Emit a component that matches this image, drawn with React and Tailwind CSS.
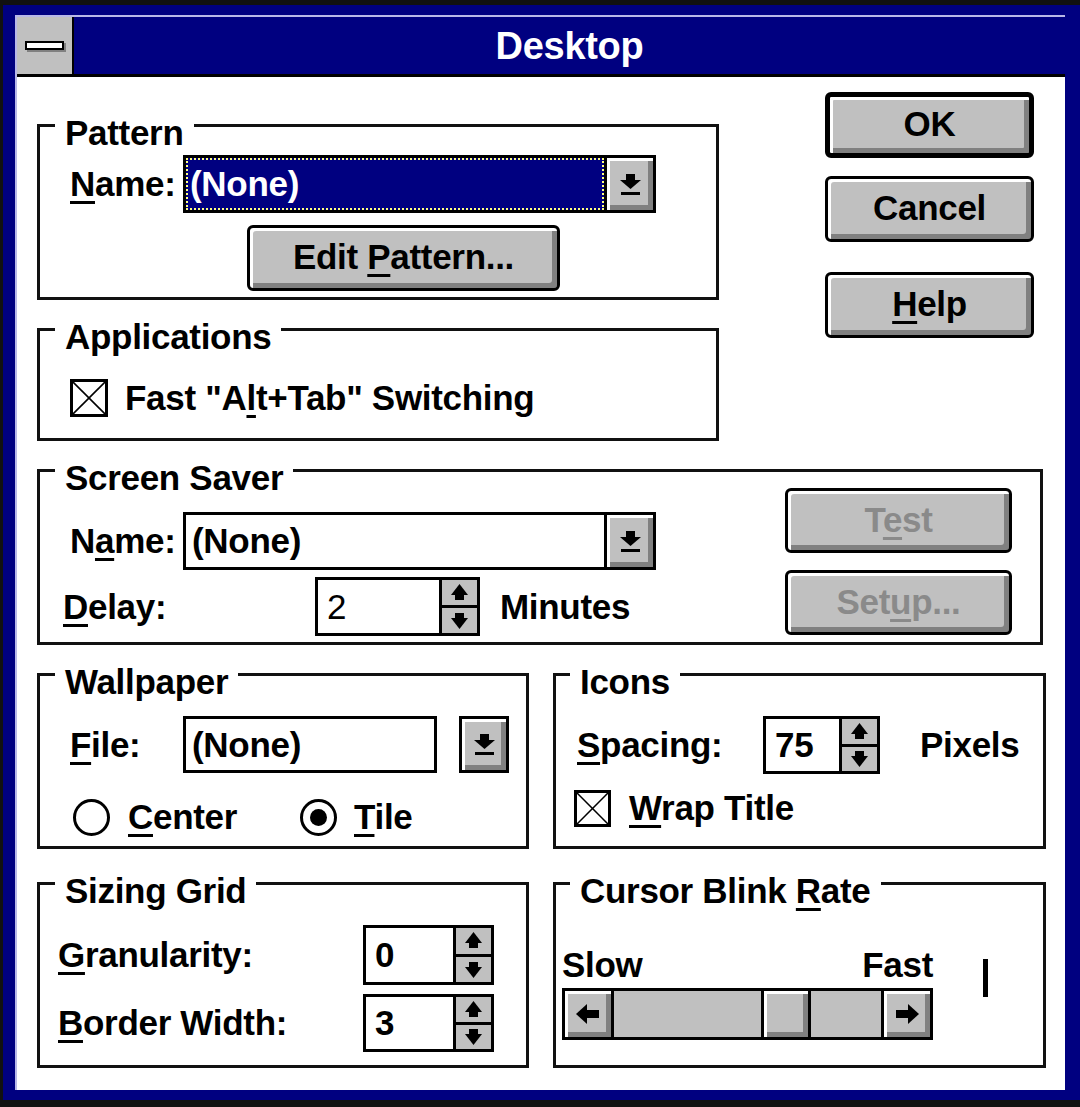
import React from 'react';

// Windows 3.1 "Desktop" control panel dialog

const U = ({ children }) => (
  <span className="underline decoration-3 underline-offset-[5px]">{children}</span>
);

const raised = 'bg-[#c0c0c0] shadow-[inset_3px_3px_0_#ffffff,inset_-5px_-5px_0_#808080]';

function Button({ children, className = '', isDefault = false, disabled = false }) {
  return (
    <div
      className={`flex items-center justify-center rounded-[6px] border-black ${raised} ${
        isDefault ? 'border-[5px]' : 'border-[3px]'
      } ${disabled ? 'text-[#8a8a8a]' : 'text-black'} ${className}`}
    >
      <span className="-mt-[2px]">{children}</span>
    </div>
  );
}

function DropArrow() {
  return (
    <svg width="23" height="21" viewBox="0 0 23 21">
      <rect x="7" y="0" width="9" height="6" fill="black" />
      <polygon points="1,6 22,6 11.5,15" fill="black" />
      <rect x="2" y="18" width="19" height="3" fill="black" />
    </svg>
  );
}

function SpinUp() {
  return (
    <svg width="17" height="17" viewBox="0 0 17 17">
      <polygon points="8.5,0 17,11 0,11" fill="black" />
      <rect x="4" y="11" width="9" height="5" fill="black" />
    </svg>
  );
}

function SpinDown() {
  return (
    <svg width="17" height="17" viewBox="0 0 17 17">
      <rect x="4" y="1" width="9" height="5" fill="black" />
      <polygon points="0,6 17,6 8.5,17" fill="black" />
    </svg>
  );
}

function ScrollArrow({ dir }) {
  return (
    <svg width="24" height="20" viewBox="0 0 24 20">
      {dir === 'left' ? (
        <>
          <polygon points="0,10 11,0 11,20" fill="black" />
          <rect x="11" y="6" width="12" height="8" fill="black" />
        </>
      ) : (
        <>
          <rect x="1" y="6" width="12" height="8" fill="black" />
          <polygon points="24,10 13,0 13,20" fill="black" />
        </>
      )}
    </svg>
  );
}

function DropButton({ className = '' }) {
  return (
    <div className={`flex items-center justify-center ${raised} ${className}`}>
      <DropArrow />
    </div>
  );
}

function Combo({ selected = false, className = '' }) {
  return (
    <div className={`flex border-[3px] border-black bg-white ${className}`}>
      {selected ? (
        <div className="flex flex-1 items-center border-2 border-dotted border-[#ffff80] bg-[#000080] pl-[2px] text-white">
          (None)
        </div>
      ) : (
        <div className="flex flex-1 items-center pl-[6px]">(None)</div>
      )}
      <DropButton className="w-[49px] border-l-[3px] border-black" />
    </div>
  );
}

function Spin({ value, className = '', thin = false }) {
  return (
    <div className={`flex border-[3px] border-black bg-white ${className}`}>
      <div className={`flex flex-1 items-center pl-[9px] ${thin ? 'font-normal' : ''}`}>{value}</div>
      <div className="flex w-[38px] flex-col border-l-[3px] border-black bg-[#c0c0c0]">
        <div className="flex flex-1 items-center justify-center">
          <SpinUp />
        </div>
        <div className="h-[3px] bg-black" />
        <div className="flex flex-1 items-center justify-center">
          <SpinDown />
        </div>
      </div>
    </div>
  );
}

function Checkbox({ className = '' }) {
  return (
    <div className={`border-[3px] border-black bg-white ${className}`}>
      <svg className="h-full w-full" viewBox="0 0 10 10" preserveAspectRatio="none">
        <line x1="0" y1="0" x2="10" y2="10" stroke="black" strokeWidth="0.5" />
        <line x1="10" y1="0" x2="0" y2="10" stroke="black" strokeWidth="0.5" />
      </svg>
    </div>
  );
}

function Radio({ checked = false }) {
  return (
    <div className="flex h-[37px] w-[37px] items-center justify-center rounded-full border-[3px] border-black bg-white">
      {checked && <div className="h-[17px] w-[17px] rounded-full bg-black" />}
    </div>
  );
}

function Group({ title, className = '', labelClass = 'ml-[15px]', children }) {
  return (
    <div className={`border-[3px] border-[#111] ${className}`}>
      <div className={`-mt-[14px] w-fit bg-white px-[10px] leading-[40px] ${labelClass}`}>{title}</div>
      {children}
    </div>
  );
}

export default function App() {
  return (
    <div className="flex h-[1107px] w-[1080px] flex-col overflow-hidden bg-[#111] pb-[7px] pl-[3px] pt-[5px] font-['Liberation_Sans',Arial,sans-serif] text-[35px] font-bold leading-[40px] tracking-[-0.3px] text-black">
      <div className="flex flex-1 flex-col border-b-[10px] border-l-[12px] border-r-[15px] border-t-[10px] border-[#000080]">
        <div className="flex flex-1 flex-col border-l-2 border-t-2 border-[#b8b8e8]">
          {/* Title bar */}
          <div className="flex h-[60px] border-b-[3px] border-black bg-[#000080]">
            <div className="flex w-[57px] items-center justify-center border-r-2 border-black bg-[#c0c0c0]">
              <div className="h-[9px] w-[39px] border-2 border-black bg-white shadow-[2px_2px_0_#808080]" />
            </div>
            <div className="flex flex-1 items-center justify-center text-[38px] text-white">Desktop</div>
          </div>

          {/* Dialog body */}
          <div className="flex-1 bg-white pl-[20px] pt-[15px]">
            <div className="flex">
              <div className="mt-[32px] w-[682px]">
                <Group title="Pattern" className="h-[176px]">
                  <div className="mt-[2px] flex h-[58px] items-center pl-[30px]">
                    <div className="w-[113px]">
                      <U>N</U>ame:
                    </div>
                    <Combo selected className="h-[58px] w-[473px]" />
                  </div>
                  <Button className="ml-[207px] mt-[12px] h-[66px] w-[313px]">
                    Edit <U>P</U>attern...
                  </Button>
                </Group>

                <Group title="Applications" className="mt-[28px] h-[113px]">
                  <div className="mt-[21px] flex items-center pl-[30px]">
                    <Checkbox className="h-[38px] w-[38px]" />
                    <div className="ml-[17px]">
                      Fast "A<U>l</U>t+Tab" Switching
                    </div>
                  </div>
                </Group>
              </div>

              <div className="ml-[106px] flex w-[209px] flex-col">
                <Button isDefault className="h-[66px]">
                  OK
                </Button>
                <Button className="mt-[18px] h-[66px]">Cancel</Button>
                <Button className="mt-[30px] h-[66px]">
                  <U>H</U>elp
                </Button>
              </div>
            </div>

            <Group title="Screen Saver" className="mt-[28px] h-[176px] w-[1006px]">
              <div className="flex">
                <div className="flex w-[616px] flex-col">
                  <div className="mt-[14px] flex h-[58px] items-center pl-[30px]">
                    <div className="w-[113px]">
                      N<U>a</U>me:
                    </div>
                    <Combo className="h-[58px] w-[473px]" />
                  </div>
                  <div className="mt-[7px] flex h-[59px] items-center pl-[23px]">
                    <div className="w-[252px]">
                      <U>D</U>elay:
                    </div>
                    <Spin value="2" thin className="h-[59px] w-[165px]" />
                    <div className="ml-[20px]">Minutes</div>
                  </div>
                </div>
                <div className="-mt-[10px] ml-auto mr-[28px] flex w-[227px] flex-col">
                  <Button disabled className="h-[65px]">
                    T<U>e</U>st
                  </Button>
                  <Button disabled className="mt-[17px] h-[65px]">
                    Set<U>u</U>p...
                  </Button>
                </div>
              </div>
            </Group>

            <div className="mt-[28px] flex gap-[24px]">
              <Group title="Wallpaper" className="h-[176px] w-[492px]">
                <div className="mt-[14px] flex h-[57px] items-center pl-[30px]">
                  <div className="w-[113px]">
                    <U>F</U>ile:
                  </div>
                  <div className="flex h-[57px] w-[254px] items-center border-[3px] border-black pl-[6px]">(None)</div>
                  <div className="ml-[22px] h-[57px] w-[50px] border-[3px] border-black">
                    <DropButton className="h-full w-full" />
                  </div>
                </div>
                <div className="mt-[24px] flex items-center pl-[33px]">
                  <div className="flex w-[227px] items-center">
                    <Radio />
                    <div className="ml-[18px]">
                      <U>C</U>enter
                    </div>
                  </div>
                  <Radio checked />
                  <div className="ml-[17px]">
                    <U>T</U>ile
                  </div>
                </div>
              </Group>

              <Group title="Icons" labelClass="ml-[14px]" className="h-[176px] w-[493px]">
                <div className="mt-[14px] flex h-[58px] items-center pl-[21px]">
                  <div className="w-[186px]">
                    <U>S</U>pacing:
                  </div>
                  <Spin value="75" className="h-[58px] w-[117px]" />
                  <div className="ml-[40px]">Pixels</div>
                </div>
                <div className="mt-[14px] flex items-center pl-[18px]">
                  <Checkbox className="h-[37px] w-[37px]" />
                  <div className="ml-[18px]">
                    <U>W</U>rap Title
                  </div>
                </div>
              </Group>
            </div>

            <div className="mt-[33px] flex gap-[24px]">
              <Group title="Sizing Grid" className="h-[186px] w-[492px]">
                <div className="mt-[14px] flex h-[60px] items-center pl-[18px]">
                  <div className="w-[305px]">
                    <U>G</U>ranularity:
                  </div>
                  <Spin value="0" className="h-[60px] w-[131px]" />
                </div>
                <div className="mt-[9px] flex h-[58px] items-center pl-[18px]">
                  <div className="w-[305px]">
                    <U>B</U>order Width:
                  </div>
                  <Spin value="3" className="h-[58px] w-[131px]" />
                </div>
              </Group>

              <Group
                title={
                  <>
                    Cursor Blink <U>R</U>ate
                  </>
                }
                labelClass="ml-[14px]"
                className="h-[186px] w-[493px]"
              >
                <div className="flex">
                  <div className="ml-[6px] w-[371px]">
                    <div className="mt-[34px] flex justify-between">
                      <span>Slow</span>
                      <span>Fast</span>
                    </div>
                    <div className="mt-[3px] flex h-[52px] border-[3px] border-black bg-[#c0c0c0]">
                      <div className={`flex w-[49px] items-center justify-center border-r-[3px] border-black ${raised}`}>
                        <ScrollArrow dir="left" />
                      </div>
                      <div className="w-[147px]" />
                      <div className={`w-[50px] border-x-[3px] border-black ${raised}`} />
                      <div className="flex-1" />
                      <div className={`flex w-[49px] items-center justify-center border-l-[3px] border-black ${raised}`}>
                        <ScrollArrow dir="right" />
                      </div>
                    </div>
                  </div>
                  <div className="ml-[50px] mt-[48px] h-[38px] w-[5px] bg-black" />
                </div>
              </Group>
            </div>
          </div>
        </div>
      </div>
    </div>
  );
}
